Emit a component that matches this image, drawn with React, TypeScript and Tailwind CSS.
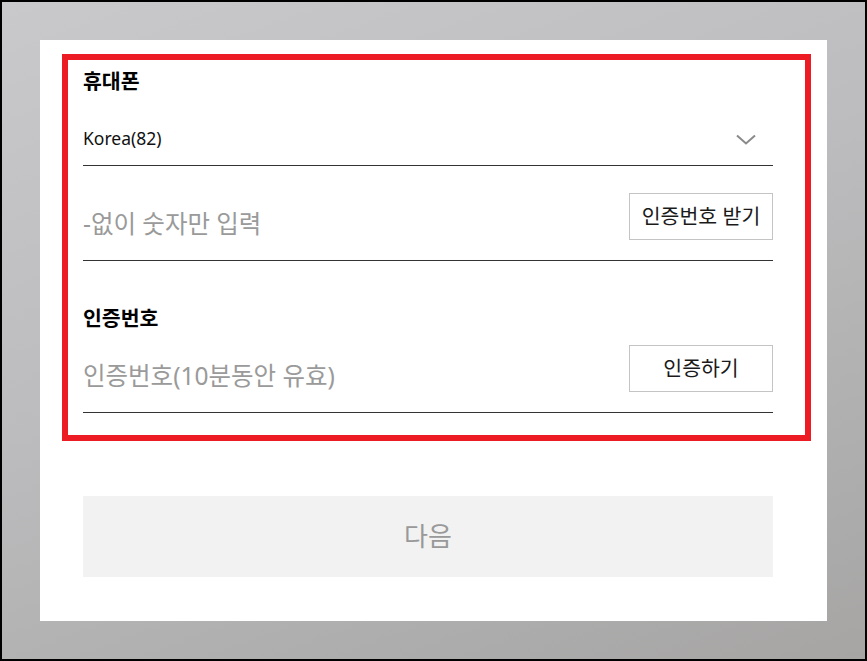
import { useState } from 'react';

const font = { fontFamily: '"Noto Sans", "Noto Sans CJK KR", sans-serif' };

const ChevronDown = () => (
  <svg width="20" height="11" viewBox="0 0 20 11" fill="none" className="mb-[5px] mr-[17px]">
    <path d="M1 1.5 L10 9.5 L19 1.5" stroke="#8a8a8a" strokeWidth="2" />
  </svg>
);

const App = () => {
  const [phone, setPhone] = useState('');
  const [code, setCode] = useState('');

  return (
    <div
      className="w-[867px] h-[661px] border-2 border-black bg-[linear-gradient(160deg,#c9c9cb_0%,#bcbcbe_45%,#a6a5a4_100%)] pt-[38px] pl-[38px]"
      style={font}>
      <div className="w-[787px] h-[581px] bg-white pt-[14px] flex flex-col">
        {/* highlighted form block */}
        <div className="ml-[22px] w-[749px] border-[6px] border-[#ed1c24] pl-[15px] pt-[7px] pb-[22px]">
          <div className="w-[690px]">
            <div className="h-[28px] text-[20.5px] leading-[28px] font-bold text-black">휴대폰</div>
            <div className="flex items-end justify-between pt-[31px] pb-[15px] border-b border-[#333]">
              <span className="text-[17.5px] leading-[24px] text-[#111]">Korea(82)</span>
              <ChevronDown />
            </div>
            <div className="flex items-end justify-between pt-[27px] pb-[20px] border-b border-[#333]">
              <input
                value={phone}
                onChange={(e) => setPhone(e.target.value)}
                placeholder="-없이 숫자만 입력"
                className="flex-1 h-[32px] text-[24.5px] leading-[32px] text-[#333] placeholder:text-[#9a9a9a] outline-none"
              />
              <button className="w-[144px] h-[47px] border border-[#c4c4c4] text-[20.5px] text-[#1a1a1a]">
                인증번호 받기
              </button>
            </div>

            <div className="mt-[43px] h-[28px] text-[20.5px] leading-[28px] font-bold text-black">인증번호</div>
            <div className="flex items-end justify-between pt-[13px] pb-[20px] border-b border-[#333]">
              <input
                value={code}
                onChange={(e) => setCode(e.target.value)}
                placeholder="인증번호(10분동안 유효)"
                className="flex-1 h-[32px] text-[24.5px] leading-[32px] text-[#333] placeholder:text-[#9a9a9a] outline-none"
              />
              <button className="w-[144px] h-[47px] border border-[#c4c4c4] text-[20.5px] text-[#1a1a1a]">
                인증하기
              </button>
            </div>
          </div>
        </div>

        <button className="mt-[55px] ml-[43px] w-[690px] h-[81px] bg-[#f2f2f2] text-[26px] text-[#999]">
          다음
        </button>
      </div>
    </div>
  );
};

export default App;
